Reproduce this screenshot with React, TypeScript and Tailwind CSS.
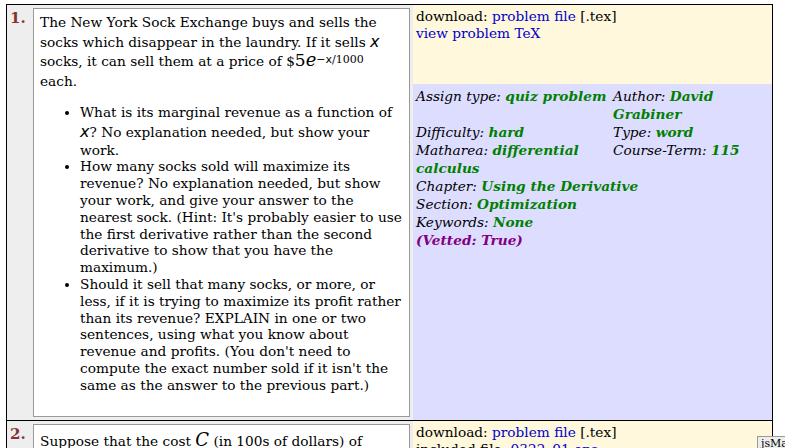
import React from "react";

const serif = { fontFamily: '"DejaVu Serif", serif' };
const sansMath = { fontFamily: '"DejaVu Sans", sans-serif' };

function Label({ k, v }: { k: string; v: React.ReactNode }) {
  return (
    <div>
      <span className="italic">{k}: </span>
      <span className="italic font-bold text-[#008000]">{v}</span>
    </div>
  );
}

function MathX() {
  return (
    <span className="italic text-[16px] leading-[21px]" style={sansMath}>
      x
    </span>
  );
}

function Row1() {
  return (
    <div className="flex border-b border-black">
      <div className="flex w-[406px] shrink-0 bg-[#eeeeee] pt-[3px] pb-[3px]">
        <div className="w-[26px] shrink-0 pl-[3px] pt-[1px] text-[15px] font-bold leading-[18px] text-[#883333]">1.</div>
        <div className="w-[377px] h-[409px] border border-[#999999] bg-white px-[6px] pt-[4px]">
          <p className="leading-[19.7px]">
            The New York Sock Exchange buys and sells the socks which disappear in the laundry. If it sells{" "}
            <span className="italic text-[16px] leading-[0px]" style={sansMath}>x</span>{" "}
            socks, it can sell them at a price of $
            <span className="text-[17px] leading-[0px]">5</span>
            <span className="italic text-[18px] leading-[0px]">e</span>
            <sup className="text-[11px] leading-[0px] relative -top-[3px]">
              −<span style={sansMath}>x</span>/1000
            </sup>{" "}
            each.
          </p>
          <ul className="mt-[12px] list-disc pl-[40px]">
            <li>
              What is its marginal revenue as a function of <MathX />? No explanation needed, but show your work.
            </li>
            <li>
              How many socks sold will maximize its revenue? No explanation needed, but show your work, and give your answer to the nearest sock. (Hint: It's probably easier to use the first derivative rather than the second derivative to show that you have the maximum.)
            </li>
            <li>
              Should it sell that many socks, or more, or less, if it is trying to maximize its profit rather than its revenue? EXPLAIN in one or two sentences, using what you know about revenue and profits. (You don't need to compute the exact number sold if it isn't the same as the answer to the previous part.)
            </li>
          </ul>
        </div>
      </div>
      <div className="flex flex-1 flex-col">
        <div className="h-[79px] bg-[#fff8dc] px-[3px] pt-[3px]">
          <div>
            download: <span className="text-[#0000cc]">problem file</span> [.tex]
          </div>
          <div className="text-[#0000cc]">view problem TeX</div>
        </div>
        <div className="flex-1 bg-[#ddddff] px-[3px] pt-[3px] leading-[18px]">
          <div className="grid grid-cols-[197px_1fr]">
            <Label k="Assign type" v="quiz problem" />
            <Label k="Author" v="David Grabiner" />
            <Label k="Difficulty" v="hard" />
            <Label k="Type" v="word" />
            <Label k="Matharea" v="differential calculus" />
            <Label k="Course-Term" v="115" />
          </div>
          <Label k="Chapter" v="Using the Derivative" />
          <Label k="Section" v="Optimization" />
          <Label k="Keywords" v="None" />
          <div className="italic font-bold text-[#800080]">(Vetted: True)</div>
        </div>
      </div>
    </div>
  );
}

function Row2() {
  return (
    <div className="flex">
      <div className="flex w-[406px] shrink-0 bg-[#eeeeee] pt-[3px] pb-[3px]">
        <div className="w-[26px] shrink-0 pl-[3px] pt-[1px] text-[15px] font-bold leading-[18px] text-[#883333]">2.</div>
        <div className="w-[377px] h-[200px] border border-[#999999] bg-white px-[6px] pt-[7px]">
          <p className="leading-[19.7px]">
            Suppose that the cost{" "}
            <span className="italic text-[18px] leading-[0px]">C</span> (in 100s of dollars) of producing
          </p>
        </div>
      </div>
      <div className="flex flex-1 flex-col">
        <div className="h-[79px] bg-[#fff8dc] px-[3px] pt-[3px]">
          <div>
            download: <span className="text-[#0000cc]">problem file</span> [.tex]
          </div>
          <div>
            included file: <span className="text-[#0000cc]">0322_01.eps</span>
          </div>
        </div>
      </div>
    </div>
  );
}

export default function App() {
  return (
    <div className="relative h-[448px] w-[785px] overflow-hidden bg-white text-black" style={serif}>
      <div className="ml-[6px] mt-[4px] w-[767px] border border-black text-[13.7px] leading-[16.8px]">
        <Row1 />
        <Row2 />
      </div>
      <div className="absolute left-[757px] top-[436px] border border-[#999999] bg-[#eeeeee] px-[3px] text-[11px] leading-[14px] text-black">
        jsMath
      </div>
    </div>
  );
}
